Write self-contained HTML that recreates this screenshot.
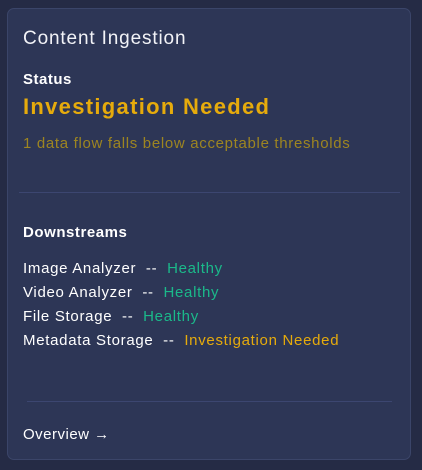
<!DOCTYPE html>
<html><head><style>
body{margin:0;width:422px;height:470px;background:#252b45;font-family:"Liberation Sans",sans-serif;position:relative;overflow:hidden}
.card{position:absolute;left:7px;top:8px;width:404px;height:452px;background:#2d3656;border:1px solid #3b4569;border-radius:7px;box-sizing:border-box}
.t{position:absolute;white-space:nowrap;color:#fff;letter-spacing:0.7px}
.hr{position:absolute;height:1px;background:#3c4670}
.g{color:#1bb98a}.y{color:#e6ab0c}
</style></head><body>
<div class="card"></div>
<div class="t" style="left:23px;top:28px;font-size:19px;color:#f2f3f7;letter-spacing:0.85px">Content Ingestion</div>
<div class="t" style="left:23px;top:71px;font-size:15px;font-weight:bold;letter-spacing:0.5px">Status</div>
<div class="t y" style="left:23px;top:94px;font-size:22px;font-weight:bold;letter-spacing:1.3px">Investigation Needed</div>
<div class="t" style="left:23px;top:135px;font-size:15px;color:#9d8521;letter-spacing:0.68px">1 data flow falls below acceptable thresholds</div>
<div class="hr" style="left:19px;top:192px;width:381px"></div>
<div class="t" style="left:23px;top:224px;font-size:15px;font-weight:bold;letter-spacing:0.55px">Downstreams</div>
<div class="t" style="left:23px;top:260px;font-size:15px">Image Analyzer &nbsp;-- &nbsp;<span class="g">Healthy</span></div>
<div class="t" style="left:23px;top:284px;font-size:15px">Video Analyzer &nbsp;-- &nbsp;<span class="g">Healthy</span></div>
<div class="t" style="left:23px;top:308px;font-size:15px">File Storage &nbsp;-- &nbsp;<span class="g">Healthy</span></div>
<div class="t" style="left:23px;top:332px;font-size:15px">Metadata Storage &nbsp;-- &nbsp;<span class="y">Investigation Needed</span></div>
<div class="hr" style="left:27px;top:401px;width:365px"></div>
<div class="t" style="left:23px;top:426px;font-size:15px;letter-spacing:0.5px">Overview →</div>
</body></html>
